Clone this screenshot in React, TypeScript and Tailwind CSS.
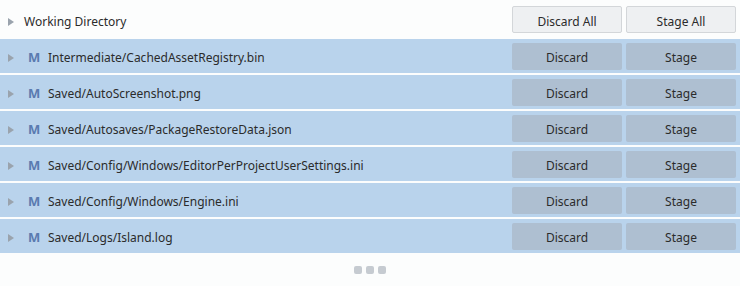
import React from "react";

const files = [
  "Intermediate/CachedAssetRegistry.bin",
  "Saved/AutoScreenshot.png",
  "Saved/Autosaves/PackageRestoreData.json",
  "Saved/Config/Windows/EditorPerProjectUserSettings.ini",
  "Saved/Config/Windows/Engine.ini",
  "Saved/Logs/Island.log",
];

const Arrow = () => (
  <svg width="6" height="8" viewBox="0 0 6 8" className="shrink-0 mt-[4px]">
    <path d="M0 0 L6 4 L0 8 Z" fill="#9aa3ad" />
  </svg>
);

const App = () => {
  return (
    <div
      className="w-[740px] h-[286px] bg-[#fcfdfd] text-[12px] text-[#2b2b2b]"
      style={{ fontFamily: '"Noto Sans", "Open Sans", sans-serif' }}
    >
      <div className="h-[39px] flex items-center pl-[8px] pr-[4px]">
        <Arrow />
        <span className="ml-[10px] mt-[4px] flex-1">Working Directory</span>
        <button className="w-[110px] h-[27px] pt-[4px] bg-[#eef0f2] border border-[#d3d6d9] rounded-[2px]">
          Discard All
        </button>
        <button className="ml-[4px] w-[110px] h-[27px] pt-[4px] bg-[#eef0f2] border border-[#d3d6d9] rounded-[2px]">
          Stage All
        </button>
      </div>

      <div className="flex flex-col gap-[2px]">
        {files.map((f) => (
          <div key={f} className="h-[34px] bg-[#b9d3ec] flex items-center pl-[8px] pr-[4px]">
            <Arrow />
            <span className="ml-[14px] mt-[4px] w-[20px] font-bold text-[#5a7bb0] text-[13px]">M</span>
            <span className="flex-1 mt-[4px]">{f}</span>
            <button className="w-[110px] h-[27px] pt-[4px] bg-[#aebfd1] rounded-[2px]">Discard</button>
            <button className="ml-[4px] w-[110px] h-[27px] pt-[4px] bg-[#aebfd1] rounded-[2px]">Stage</button>
          </div>
        ))}
      </div>

      <div className="flex justify-center gap-[4px] mt-[13px]">
        <div className="w-[8px] h-[8px] rounded-[2px] bg-[#c6cbd1]" />
        <div className="w-[8px] h-[8px] rounded-[2px] bg-[#c6cbd1]" />
        <div className="w-[8px] h-[8px] rounded-[2px] bg-[#c6cbd1]" />
      </div>
    </div>
  );
};

export default App;
